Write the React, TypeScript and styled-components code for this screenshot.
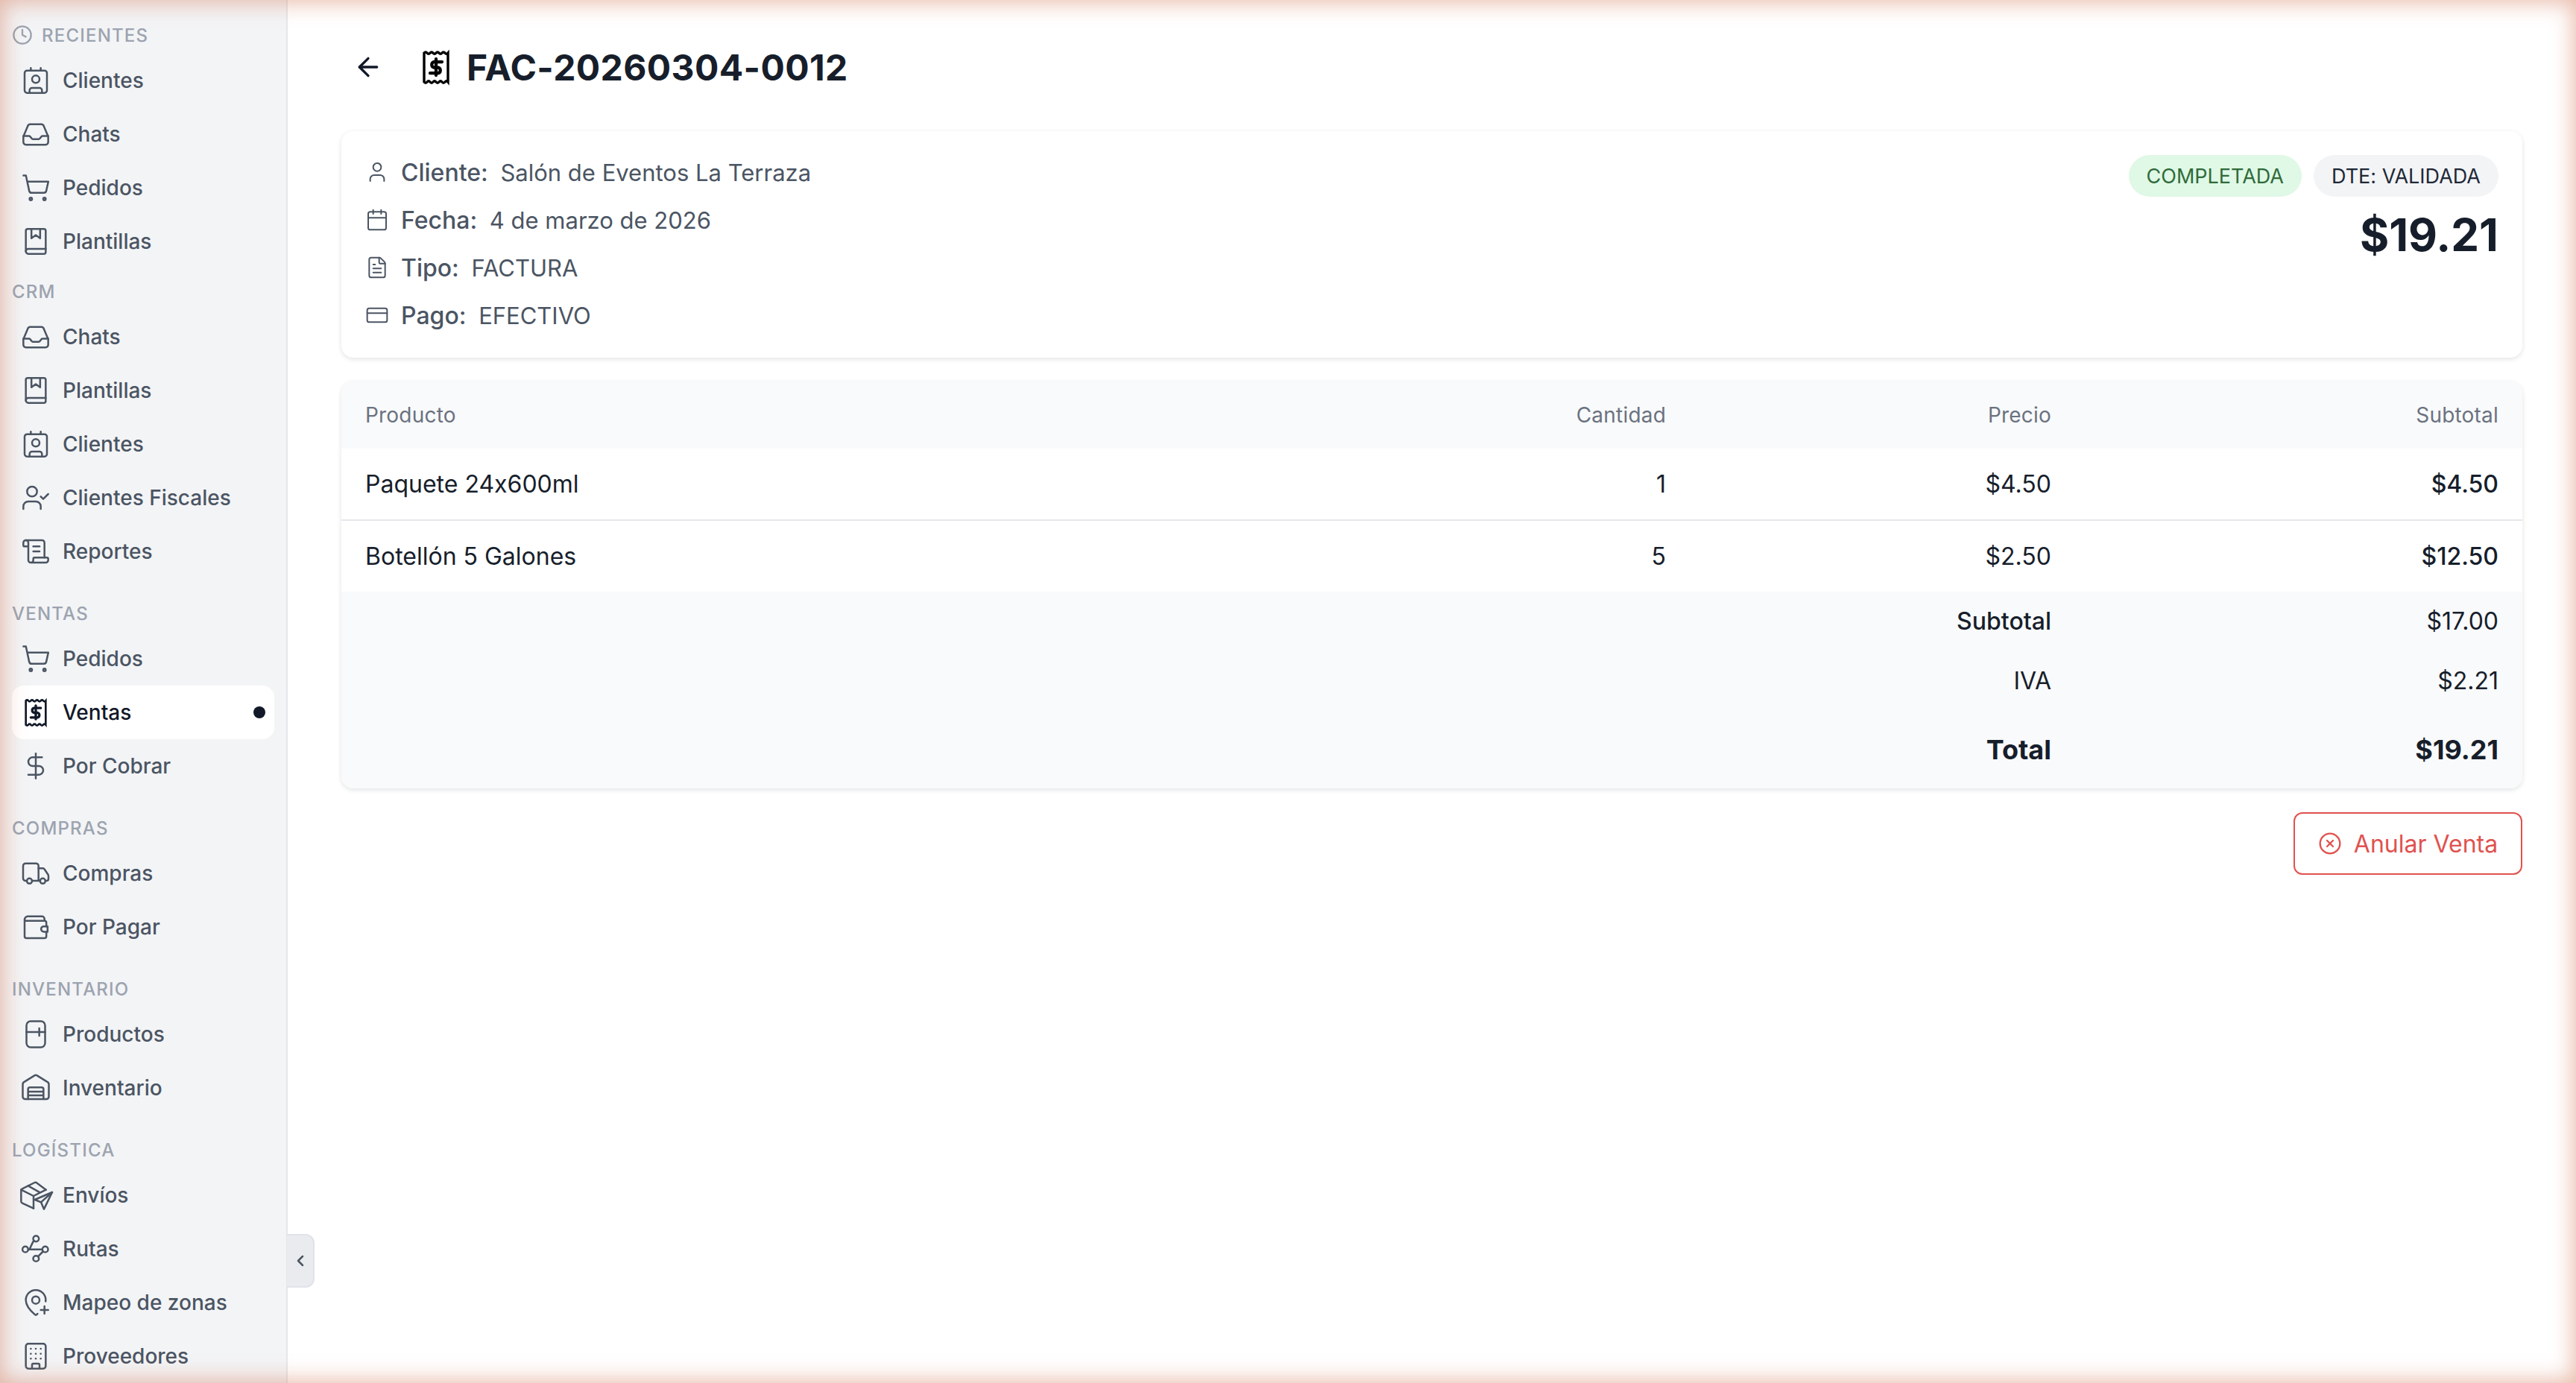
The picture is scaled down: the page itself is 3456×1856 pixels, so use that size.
import styled, { createGlobalStyle } from "styled-components";
import type { ReactNode } from "react";
import {
  ArrowLeft,
  Building,
  Calendar,
  ChevronLeft,
  CircleX,
  Clock,
  Contact,
  CreditCard,
  DollarSign,
  FileText,
  MapPinPlus,
  ScrollText,
  ShoppingCart,
  User,
  UserCheck,
} from "lucide-react";

const GlobalStyle = createGlobalStyle`
  html, body {
    margin: 0;
    padding: 0;
    height: 100%;
    overflow: hidden;
    background: #fff;
  }
  * {
    box-sizing: border-box;
  }
  body {
    font-family: "Inter", "Liberation Sans", sans-serif;
    font-feature-settings: "calt" 0;
  }
`;

const Layout = styled.div`
  display: flex;
  width: 100vw;
  height: 100vh;
  position: relative;
  overflow: hidden;
`;

const Vignette = styled.div`
  position: absolute;
  inset: 0;
  pointer-events: none;
  z-index: 10;
  box-shadow: inset 0 0 30px 3px rgba(214, 125, 95, 0.55);
`;

const Sidebar = styled.aside`
  width: 386px;
  flex-shrink: 0;
  height: 100%;
  overflow: hidden;
  background: #f3f4f6;
  border-right: 2px solid #e5e7eb;
  padding: 24px 16px 0 16px;
  display: flex;
  flex-direction: column;
`;

const NavGroup = styled.section<{ $gap?: number }>`
  margin-bottom: ${(p) => p.$gap ?? 24}px;
`;

const NavLabel = styled.div`
  height: 44px;
  margin-bottom: 4px;
  padding-top: 2px;
  display: flex;
  align-items: center;
  gap: 12px;
  color: #9ca3af;
  font-size: 24px;
  font-weight: 500;
  letter-spacing: 1.2px;
  text-transform: uppercase;
`;

const NavItem = styled.div<{ $active?: boolean }>`
  height: 72px;
  display: flex;
  align-items: center;
  gap: 16px;
  padding: 0 12px;
  border-radius: 16px;
  font-size: 28px;
  font-weight: ${(p) => (p.$active ? 500 : 450)};
  color: ${(p) => (p.$active ? "#111827" : "#4b5563")};
  background: ${(p) => (p.$active ? "#fff" : "transparent")};
`;

const NavText = styled.span`
  flex: 1;
`;

const ActiveDot = styled.span`
  width: 16px;
  height: 16px;
  border-radius: 50%;
  background: #111827;
`;

const CollapseTab = styled.button`
  position: absolute;
  left: 385px;
  top: 1656px;
  width: 37px;
  height: 72px;
  padding: 0;
  display: flex;
  align-items: center;
  justify-content: center;
  color: #4b5563;
  background: #e9ebef;
  border: 2px solid #e0e3e9;
  border-left: none;
  border-radius: 0 12px 12px 0;
`;

const Main = styled.main`
  flex: 1;
  min-width: 0;
  padding: 54px 72px 0;
`;

const PageHeader = styled.header`
  height: 72px;
  margin-bottom: 50px;
  display: flex;
  align-items: center;
`;

const BackButton = styled.button`
  width: 72px;
  height: 72px;
  padding: 0;
  margin-right: 31px;
  display: flex;
  align-items: center;
  justify-content: center;
  color: #111827;
  background: transparent;
  border: none;
`;

const PageTitle = styled.h1`
  margin: 2px 0 0 17px;
  color: #171e2b;
  font-size: 48px;
  font-weight: 700;
  letter-spacing: 0.4px;
  line-height: 72px;
`;

const Card = styled.div`
  background: #fff;
  border-radius: 16px;
  box-shadow: 0 2px 6px rgba(17, 24, 39, 0.12);
`;

const InfoCard = styled(Card)`
  height: 304px;
  padding: 23px 32px;
  display: flex;
  justify-content: space-between;
`;

const InfoList = styled.div`
  display: flex;
  flex-direction: column;
`;

const InfoRow = styled.div`
  height: 64px;
  display: flex;
  align-items: center;
  gap: 16px;
  color: #4b5563;
  font-size: 31px;
`;

const InfoKey = styled.span`
  font-size: 32px;
  font-weight: 500;
  margin-right: 8px;
`;

const InfoAside = styled.div`
  padding-top: 9px;
  display: flex;
  flex-direction: column;
  align-items: flex-end;
`;

const BadgeRow = styled.div`
  display: flex;
  gap: 16px;
`;

const Badge = styled.span<{ $tone: "green" | "gray" }>`
  height: 56px;
  padding: 0 24px;
  display: flex;
  align-items: center;
  border-radius: 28px;
  font-size: 27px;
  color: ${(p) => (p.$tone === "green" ? "#2f6b3a" : "#1f2937")};
  background: ${(p) => (p.$tone === "green" ? "#e0f8e6" : "#f3f4f6")};
`;

const TotalAmount = styled.div`
  margin-top: 15px;
  color: #171e2b;
  font-size: 60px;
  font-weight: 700;
  line-height: 72px;
`;

const TableCard = styled(Card)`
  margin-top: 32px;
  overflow: hidden;
`;

const Table = styled.table`
  width: 100%;
  table-layout: fixed;
  border-collapse: collapse;
`;

const HeadCell = styled.th<{ $right?: boolean }>`
  height: 90px;
  padding: 0 32px;
  background: #f9fafb;
  color: #6b7280;
  font-size: 28px;
  letter-spacing: 0.2px;
  font-weight: 400;
  text-align: ${(p) => (p.$right ? "right" : "left")};
`;

const BodyRow = styled.tr`
  & + & td {
    border-top: 2px solid #e5e7eb;
  }
`;

const BodyCell = styled.td<{ $right?: boolean; $strong?: boolean }>`
  height: 96px;
  padding: 0 32px;
  color: #171e2b;
  font-size: 32px;
  font-weight: ${(p) => (p.$strong ? 500 : 400)};
  text-align: ${(p) => (p.$right ? "right" : "left")};
`;

const FootCell = styled.td<{ $total?: boolean; $label?: boolean; $height: number }>`
  height: ${(p) => p.$height}px;
  padding: 0 32px;
  background: #f9fafb;
  color: #171e2b;
  text-align: right;
  font-size: ${(p) => (p.$total ? 36 : 32)}px;
  font-weight: ${(p) => (p.$total ? 700 : p.$label ? 500 : 400)};
`;

const Actions = styled.div`
  margin-top: 32px;
  display: flex;
  justify-content: flex-end;
`;

const VoidButton = styled.button`
  width: 307px;
  height: 84px;
  display: flex;
  align-items: center;
  justify-content: center;
  gap: 16px;
  color: #e0524f;
  background: #fff;
  border: 2px solid #e0524f;
  border-radius: 12px;
  font-family: inherit;
  font-size: 32px;
`;

const IconBox = styled.svg`
  flex-shrink: 0;
  overflow: visible;
  fill: none;
  stroke: currentColor;
  stroke-linecap: round;
  stroke-linejoin: round;
`;

function Icon({ size = 40, stroke = 1.5, children }: { size?: number; stroke?: number; children: ReactNode }) {
  return (
    <IconBox width={size} height={size} viewBox="0 0 24 24" strokeWidth={stroke}>
      {children}
    </IconBox>
  );
}

const InboxIcon = () => (
  <Icon>
    <path d="M2 14 5.6 5.4A2 2 0 0 1 7.4 4h9.2a2 2 0 0 1 1.8 1.4L22 14v4.5a2 2 0 0 1-2 2H4a2 2 0 0 1-2-2z" />
    <path d="M2 13.5h4.6a1 1 0 0 1 .8.4l1.4 1.7a1 1 0 0 0 .8.4h4.8a1 1 0 0 0 .8-.4l1.4-1.7a1 1 0 0 1 .8-.4H22" />
  </Icon>
);

const BookIcon = () => (
  <Icon>
    <path d="M4 20V3.5A1.5 1.5 0 0 1 5.5 2h13A1.5 1.5 0 0 1 20 3.5v17a1.5 1.5 0 0 1-1.5 1.5H6a2 2 0 0 1-2-2z" />
    <path d="M4 20a2 2 0 0 1 2-2h14" />
    <path d="M8.5 2v7.500l3.500-2.600 3.500 2.600V2" />
  </Icon>
);

const ReceiptIcon = ({ size = 40, stroke = 1.6 }: { size?: number; stroke?: number }) => (
  <Icon size={size} stroke={stroke}>
    <path d="M4 22V2.600q1-1.200 2 0t2 0 2 0 2 0 2 0 2 0 2 0 2 0V22q-1-1.200-2 0t-2 0-2 0-2 0-2 0-2 0-2 0-2 0z" strokeLinecap="butt" strokeLinejoin="miter" />
    <path d="M12 6.500v11M16 8.500h-5.500a2 2 0 0 0 0 3.800h3a2 2 0 0 1 0 3.800H8" strokeWidth={stroke * 1.25} />
  </Icon>
);

const TruckIcon = () => (
  <Icon>
    <path d="M4.800 18h-1a2 2 0 0 1-2-2V6a2 2 0 0 1 2-2h8.400a2 2 0 0 1 2 2v12H9" />
    <path d="M14.200 8h3.500a1.500 1.500 0 0 1 1.300.7l3 4.500a1.500 1.500 0 0 1 .2.8v2.500a1.500 1.500 0 0 1-1.500 1.500h-.7" />
    <path d="M14.200 18h1.300" />
    <circle cx="6.900" cy="18.200" r="2.100" />
    <circle cx="17.600" cy="18.200" r="2.100" />
  </Icon>
);

const WalletIcon = () => (
  <Icon>
    <path d="M3 6a2.500 2.500 0 0 1 2.500-2.500H17a2 2 0 0 1 2 2V7" />
    <path d="M3 6v13.500A1.500 1.500 0 0 0 4.500 21H19a1.500 1.500 0 0 0 1.500-1.500V16M20.500 11.500v-3A1.500 1.500 0 0 0 19 7H3.500" />
    <path d="M21.500 11.500h-3a2.200 2.200 0 0 0 0 4.400h3z" />
  </Icon>
);

const ProductIcon = () => (
  <Icon>
    <rect x="4.500" y="1.500" width="15" height="21" rx="3.400" />
    <path d="M4.500 10.200h15M14.800 7.200v6" />
  </Icon>
);

const WarehouseIcon = () => (
  <Icon>
    <path d="M1.500 19V9.200a2.400 2.400 0 0 1 1.500-2.200l8.200-5.100a1.500 1.500 0 0 1 1.600 0L21 7a2.400 2.400 0 0 1 1.500 2.200V19a2 2 0 0 1-2 2h-17a2 2 0 0 1-2-2" />
    <path d="M5.800 21V13a1.500 1.500 0 0 1 1.500-1.500h9.400a1.500 1.500 0 0 1 1.500 1.500v8M5.800 15h12.400M5.800 18h12.400" />
  </Icon>
);

const ParcelIcon = () => (
  <Icon>
    <path d="M10.200 22.600 1.100 18.400a1.500 1.500 0 0 1-.9-1.400V8.200a1.500 1.500 0 0 1 .9-1.400l10-5a1.500 1.500 0 0 1 1.300 0l7.800 5.800" />
    <path d="M.2 7.600l10 5 10-5M10.200 12.600v10M5.800 4.400l9.600 5.400" />
    <path d="M25.200 9.600 11.200 15.600l5 2 2.400 5.600z" fill="#f3f4f6" />
    <path d="M25.200 9.600 16.200 17.600" />
  </Icon>
);

const RouteIcon = () => (
  <Icon>
    <circle cx="12.200" cy="3.800" r="2.300" />
    <circle cx="3.600" cy="12.400" r="2.300" />
    <circle cx="19.600" cy="12.400" r="2.300" />
    <circle cx="12.200" cy="19.800" r="2.300" />
    <path d="M5.900 12.400h11.400M10.500 5.300C9.500 6.500 8.500 9 7 12.400M17.800 14c-1 1.200-2.500 2.600-3.900 4.200" />
  </Icon>
);

const lucide = { size: 40, strokeWidth: 1.5 };

type NavEntry = { label: string; icon: ReactNode; active?: boolean };
type NavSection = { title: string; withClock?: boolean; gap?: number; items: NavEntry[] };

const clientes: NavEntry = { label: "Clientes", icon: <Contact {...lucide} /> };
const chats: NavEntry = { label: "Chats", icon: <InboxIcon /> };
const pedidos: NavEntry = { label: "Pedidos", icon: <ShoppingCart {...lucide} /> };
const plantillas: NavEntry = { label: "Plantillas", icon: <BookIcon /> };

const sections: NavSection[] = [
  { title: "Recientes", withClock: true, gap: 8, items: [clientes, chats, pedidos, plantillas] },
  {
    title: "CRM",
    items: [
      chats,
      plantillas,
      clientes,
      { label: "Clientes Fiscales", icon: <UserCheck {...lucide} /> },
      { label: "Reportes", icon: <ScrollText {...lucide} /> },
    ],
  },
  {
    title: "Ventas",
    items: [
      pedidos,
      { label: "Ventas", icon: <ReceiptIcon />, active: true },
      { label: "Por Cobrar", icon: <DollarSign {...lucide} /> },
    ],
  },
  {
    title: "Compras",
    items: [
      { label: "Compras", icon: <TruckIcon /> },
      { label: "Por Pagar", icon: <WalletIcon /> },
    ],
  },
  {
    title: "Inventario",
    items: [
      { label: "Productos", icon: <ProductIcon /> },
      { label: "Inventario", icon: <WarehouseIcon /> },
    ],
  },
  {
    title: "Logística",
    items: [
      { label: "Envíos", icon: <ParcelIcon /> },
      { label: "Rutas", icon: <RouteIcon /> },
      { label: "Mapeo de zonas", icon: <MapPinPlus {...lucide} /> },
      { label: "Proveedores", icon: <Building {...lucide} /> },
    ],
  },
];

const info = { size: 32, strokeWidth: 1.5 };

const infoRows = [
  { key: "Cliente:", value: "Salón de Eventos La Terraza", icon: <User {...info} /> },
  { key: "Fecha:", value: "4 de marzo de 2026", icon: <Calendar {...info} /> },
  { key: "Tipo:", value: "FACTURA", icon: <FileText {...info} /> },
  { key: "Pago:", value: "EFECTIVO", icon: <CreditCard {...info} /> },
];

const lines = [
  { name: "Paquete 24x600ml", qty: 1, price: "$4.50", subtotal: "$4.50" },
  { name: "Botellón 5 Galones", qty: 5, price: "$2.50", subtotal: "$12.50" },
];

export default function App() {
  return (
    <>
      <GlobalStyle />
      <Layout>
        <Sidebar>
          {sections.map((section) => (
            <NavGroup key={section.title} $gap={section.gap}>
              <NavLabel>
                {section.withClock && <Clock size={28} strokeWidth={2} />}
                {section.title}
              </NavLabel>
              {section.items.map((item) => (
                <NavItem key={item.label} $active={item.active}>
                  {item.icon}
                  <NavText>{item.label}</NavText>
                  {item.active && <ActiveDot />}
                </NavItem>
              ))}
            </NavGroup>
          ))}
        </Sidebar>
        <CollapseTab>
          <ChevronLeft size={24} strokeWidth={2.5} />
        </CollapseTab>
        <Main>
          <PageHeader>
            <BackButton>
              <ArrowLeft size={40} strokeWidth={2} />
            </BackButton>
            <ReceiptIcon size={48} stroke={1.7} />
            <PageTitle>FAC-20260304-0012</PageTitle>
          </PageHeader>
          <InfoCard>
            <InfoList>
              {infoRows.map((row) => (
                <InfoRow key={row.key}>
                  {row.icon}
                  <span>
                    <InfoKey>{row.key}</InfoKey> {row.value}
                  </span>
                </InfoRow>
              ))}
            </InfoList>
            <InfoAside>
              <BadgeRow>
                <Badge $tone="green">COMPLETADA</Badge>
                <Badge $tone="gray">DTE: VALIDADA</Badge>
              </BadgeRow>
              <TotalAmount>$19.21</TotalAmount>
            </InfoAside>
          </InfoCard>
          <TableCard>
            <Table>
              <colgroup>
                <col />
                <col width="409" />
                <col width="517" />
                <col width="600" />
              </colgroup>
              <thead>
                <tr>
                  <HeadCell>Producto</HeadCell>
                  <HeadCell $right>Cantidad</HeadCell>
                  <HeadCell $right>Precio</HeadCell>
                  <HeadCell $right>Subtotal</HeadCell>
                </tr>
              </thead>
              <tbody>
                {lines.map((line) => (
                  <BodyRow key={line.name}>
                    <BodyCell>{line.name}</BodyCell>
                    <BodyCell $right>{line.qty}</BodyCell>
                    <BodyCell $right>{line.price}</BodyCell>
                    <BodyCell $right $strong>{line.subtotal}</BodyCell>
                  </BodyRow>
                ))}
              </tbody>
              <tfoot>
                <tr>
                  <FootCell colSpan={2} $height={79} />
                  <FootCell $label $height={79}>Subtotal</FootCell>
                  <FootCell $height={79}>$17.00</FootCell>
                </tr>
                <tr>
                  <FootCell colSpan={2} $height={80} />
                  <FootCell $height={80}>IVA</FootCell>
                  <FootCell $height={80}>$2.21</FootCell>
                </tr>
                <tr>
                  <FootCell colSpan={2} $height={105} />
                  <FootCell $total $height={105}>Total</FootCell>
                  <FootCell $total $height={105}>$19.21</FootCell>
                </tr>
              </tfoot>
            </Table>
          </TableCard>
          <Actions>
            <VoidButton>
              <CircleX size={32} strokeWidth={1.75} />
              Anular Venta
            </VoidButton>
          </Actions>
        </Main>
        <Vignette />
      </Layout>
    </>
  );
}
